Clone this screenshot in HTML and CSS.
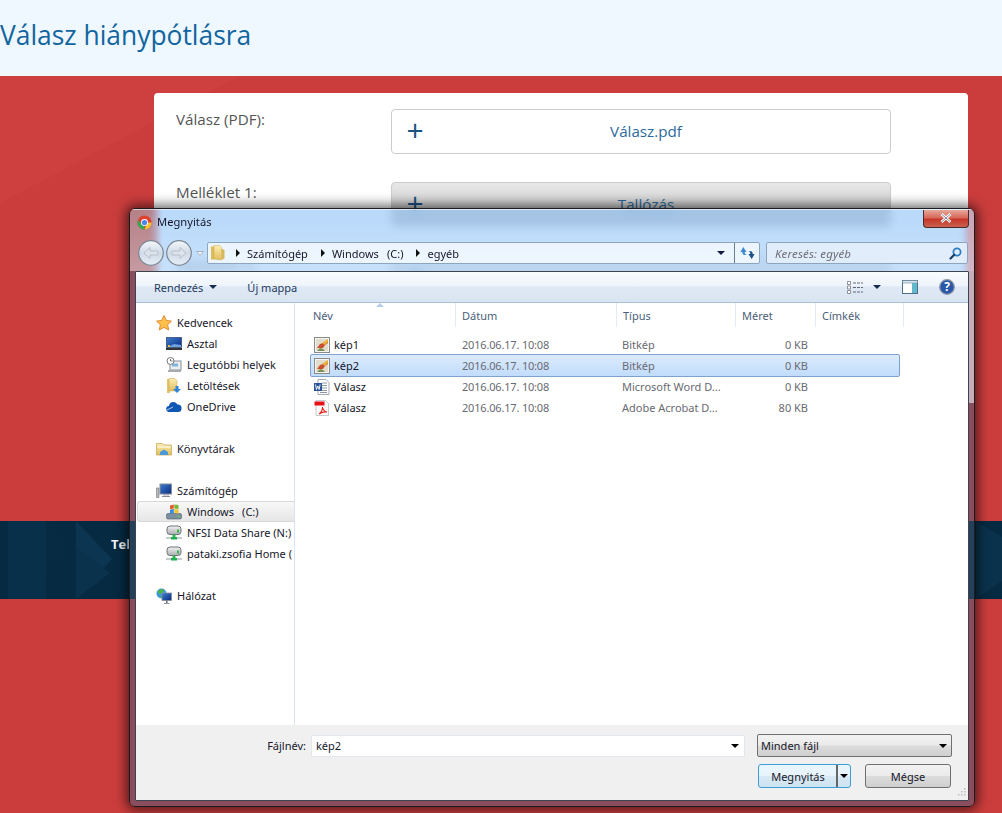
FILE: index.html
```html
<!DOCTYPE html>
<html lang="hu">
<head>
<meta charset="utf-8">
<title>Válasz hiánypótlásra</title>
<link rel="stylesheet" href="styles.css">
</head>
<body>
<svg class="defs" width="0" height="0" aria-hidden="true">
  <defs>
    <linearGradient id="gFolder" x1="0" y1="0" x2="0" y2="1"><stop offset="0" stop-color="#fbeeb0"/><stop offset="1" stop-color="#e2bd5e"/></linearGradient>
    <linearGradient id="gDrive" x1="0" y1="0" x2="0" y2="1"><stop offset="0" stop-color="#f2f2f2"/><stop offset="1" stop-color="#a9adb0"/></linearGradient>
    <linearGradient id="gScreen" x1="0" y1="0" x2="1" y2="1"><stop offset="0" stop-color="#3f7fd0"/><stop offset="1" stop-color="#082a80"/></linearGradient>
    <linearGradient id="gRound" x1="0" y1="0" x2="0" y2="1"><stop offset="0" stop-color="#f4f7fb"/><stop offset=".5" stop-color="#cfdbe8"/><stop offset="1" stop-color="#e6eef6"/></linearGradient>
    <symbol id="i-net" viewBox="0 0 16 16">
      <rect x="1" y="1" width="14" height="8.500" rx="3" fill="url(#gDrive)" stroke="#6f7579"/>
      <rect x="11" y="4.500" width="2" height="3" fill="#38b54a"/>
      <path d="M6.500 9.500h3v3h-3z" fill="#2fb455"/>
      <path d="M0 12h16v2H0z" fill="#c7cbce"/>
      <path d="M5 12h6v2.500H5z" fill="#1fae55"/>
    </symbol>
    <symbol id="i-bmp" viewBox="0 0 16 16">
      <rect x=".5" y=".5" width="15" height="15" fill="#f4f4f2" stroke="#8a8a88"/>
      <rect x="2" y="2" width="12" height="12" fill="#e2dccd"/>
      <path d="M3 11l3-4 3-1 5-3v3l-3 2-2 3H3z" fill="#c8502c"/>
      <path d="M8 6l6-4v3l-3 3z" fill="#eab03a"/>
      <path d="M3 14l3-3 3 1 2 2z" fill="#7a8f55"/>
    </symbol>
  </defs>
</svg>

<header class="page-head"><h1 class="page-title">Válasz hiánypótlásra</h1></header>

<main class="page-main">
  <form class="card">
    <div class="form-row">
      <label class="form-label">Válasz (PDF):</label>
      <div class="upload"><span class="upload-plus">+</span><span class="upload-text">Válasz.pdf</span></div>
    </div>
    <div class="form-row">
      <label class="form-label">Melléklet 1:</label>
      <div class="upload upload-empty"><span class="upload-plus">+</span><span class="upload-text">Tallózás</span></div>
    </div>
    <div class="form-row">
      <label class="form-label">Melléklet 2:</label>
      <div class="upload upload-empty"><span class="upload-plus">+</span></div>
    </div>
  </form>
</main>

<footer class="page-foot">
  <svg class="foot-pattern" viewBox="0 0 1002 78" preserveAspectRatio="none" aria-hidden="true">
    <path d="M8 0h38v78H8z" fill="#08304a"/>
    <path d="M46 0l28 26-28 26z" fill="#072b43"/>
    <path d="M76 0l36 38-36 40z" fill="#0b3550"/>
    <path d="M76 26l34 26-34 26z" fill="#0a324c"/>
    <path d="M976 0l26 16v44l-26 18z" fill="#0a324c"/>
  </svg>
  <span class="foot-text">Tel</span>
</footer>
<div class="page-end"></div>

<section class="dialog">
  <div class="glass">
    <div class="titlebar">
      <svg class="ico-title" viewBox="0 0 16 16">
        <circle cx="8" cy="8" r="7.500" fill="#e0412f"/>
        <path d="M15.500 8A7.500 7.500 0 0 1 8 15.500L11 8z" fill="#f6c62e"/>
        <path d="M8 15.500A7.500 7.500 0 0 1 1 5l4 5 3 1z" fill="#3aa757"/>
        <circle cx="8" cy="8" r="3.700" fill="#fff"/>
        <circle cx="8" cy="8" r="2.800" fill="#4786ee"/>
      </svg>
      <span class="title-text">Megnyitás</span>
      <span class="close-btn"><svg class="ico-x" viewBox="0 0 12 10"><path d="M1.500 1L10.500 9M10.500 1L1.500 9" stroke="#fff" stroke-width="2.800"/><path d="M1.500 1L10.500 9M10.500 1L1.500 9" stroke="#556" stroke-width=".7"/></svg></span>
    </div>
    <div class="navbar">
      <svg class="ico-nav" viewBox="0 0 26 26">
        <circle cx="13" cy="13" r="12.300" fill="url(#gRound)" stroke="#7d8793" stroke-width="1.200"/>
        <path d="M6 13l6-5.500v3.500h8v4h-8v3.500z" fill="#dde3ea" stroke="#b7c0cb"/>
      </svg>
      <svg class="ico-nav" viewBox="0 0 26 26">
        <circle cx="13" cy="13" r="12.300" fill="url(#gRound)" stroke="#7d8793" stroke-width="1.200"/>
        <path d="M20 13l-6-5.500v3.500H6v4h8v3.500z" fill="#dde3ea" stroke="#b7c0cb"/>
      </svg>
      <svg class="ico-navdrop" viewBox="0 0 8 5"><path d="M.5.5h7L4 4.500z" fill="#eef3f9" stroke="#9aa7b5" stroke-width=".8"/></svg>
      <div class="crumbs">
        <svg class="ico-16 crumb-folder" viewBox="0 0 16 16">
          <path d="M1 1.500h3.500v13H1z" fill="#dcbc5c"/><path d="M4 .5h5.500l2 2V15L4 14z" fill="url(#gFolder)" stroke="#c9a64e" stroke-width=".5"/><path d="M11.500 3.500l3 1.500v8.500l-3 1.500z" fill="#d8b75e"/>
        </svg>
        <span class="crumb-sep"></span><span class="crumb">Számítógép</span>
        <span class="crumb-sep"></span><span class="crumb crumb-drive">Windows&nbsp; (C:)</span>
        <span class="crumb-sep"></span><span class="crumb">egyéb</span>
        <span class="crumb-drop"></span>
        <span class="crumb-refresh">
          <svg class="ico-refresh" viewBox="0 0 16 14"><path d="M.5 6L3.500.5 7 6H5c0 1.500.5 2.500 2 3H4C3 8.500 2.500 7.500 2.500 6z" fill="#3d8ad0"/><path d="M15.500 8L12.500 13.500 9 8h2c0-1.500-.5-2.500-2-3h3c1 .5 1.500 1.500 1.500 3z" fill="#1c4f86"/></svg>
        </span>
      </div>
      <div class="search">
        <span class="search-text">Keresés: egyéb</span>
        <svg class="ico-search" viewBox="0 0 13 13"><circle cx="8" cy="5" r="3.600" fill="none" stroke="#2d7fc4" stroke-width="1.800"/><path d="M5.200 7.800L1.500 11.500" stroke="#17406e" stroke-width="2.200" stroke-linecap="round"/></svg>
      </div>
    </div>
  </div>

  <div class="lower">
    <div class="panel">
      <div class="toolbar">
        <span class="tool-item">Rendezés<i class="tool-caret"></i></span>
        <span class="tool-item">Új mappa</span>
        <span class="tool-spacer"></span>
        <svg class="ico-view" viewBox="0 0 16 13"><path d="M.5.5h3v3h-3zM.5 5h3v3h-3zM.5 9.500h3v3h-3z" fill="#fff" stroke="#778" stroke-width=".8"/><path d="M6 2h10M6 6.500h10M6 11h10" stroke="#667" stroke-width="1" stroke-dasharray="3 1"/></svg>
        <i class="tool-caret tool-caret-view"></i>
        <svg class="ico-pane" viewBox="0 0 16 14"><rect x=".5" y=".5" width="15" height="13" fill="#fff" stroke="#4c7186"/><rect x=".5" y=".5" width="15" height="2.500" fill="#d5e4ee" stroke="#4c7186" stroke-width=".5"/><rect x="10" y="3" width="5" height="10" fill="#62b8cc"/></svg>
        <svg class="ico-help" viewBox="0 0 16 16"><circle cx="8" cy="8" r="7.300" fill="#2a57a8" stroke="#8d97a6" stroke-width="1.300"/><text class="help-q" x="8" y="12" text-anchor="middle">?</text></svg>
      </div>

      <div class="explorer">
        <nav class="tree">
          <div class="tree-group">
            <div class="tree-head">
              <svg class="ico-16" viewBox="0 0 16 16"><path d="M8 .5l2.300 4.900 5.200.7-3.800 3.600 1 5.300L8 12.400 3.300 15l1-5.300L.5 6.100l5.200-.7z" fill="#fbc04a" stroke="#e0781e" stroke-width=".8"/></svg>
              <span>Kedvencek</span>
            </div>
            <div class="tree-item">
              <svg class="ico-16" viewBox="0 0 16 16"><rect x=".5" y="1.500" width="15" height="10" fill="url(#gScreen)" stroke="#2a3f66" stroke-width=".7"/><path d="M2 11l6-3 7 1v2z" fill="#6fa3e0"/><rect y="12" width="16" height="2" fill="#333"/><rect x="2" y="9" width="2" height="2" fill="#f1c040"/></svg>
              <span>Asztal</span>
            </div>
            <div class="tree-item">
              <svg class="ico-16" viewBox="0 0 16 16"><rect x="4" y="4" width="11" height="9" fill="#e9edf0" stroke="#8a9096"/><rect x="6" y="6.500" width="6" height="3" fill="#7fb6e0"/><rect x="2" y="13" width="13" height="2" fill="#aaa"/><circle cx="4.500" cy="4" r="3.500" fill="#fff" stroke="#777"/><path d="M4.500 2v2h2" stroke="#555" fill="none" stroke-width=".8"/></svg>
              <span>Legutóbbi helyek</span>
            </div>
            <div class="tree-item">
              <svg class="ico-16" viewBox="0 0 16 16"><path d="M1 1h3v14H1z" fill="#e4c56c"/><path d="M3 .5h6l2 2V13H3z" fill="url(#gFolder)" stroke="#c9a64e" stroke-width=".5"/><path d="M9.500 8h3v3H15l-4 4-4-4h2.500z" fill="#2f86d8"/></svg>
              <span>Letöltések</span>
            </div>
            <div class="tree-item">
              <svg class="ico-16" viewBox="0 0 16 16"><path d="M3.500 13a3 3 0 0 1-.5-6 4.500 4.500 0 0 1 8.500-1.500A3.500 3.500 0 0 1 15.500 9.500 3.500 3.500 0 0 1 12 13z" fill="#0f56b3"/><path d="M1 11l6-3" stroke="#fff" stroke-width=".7"/></svg>
              <span>OneDrive</span>
            </div>
          </div>
          <div class="tree-group">
            <div class="tree-head">
              <svg class="ico-16" viewBox="0 0 16 16"><path d="M.5 2.500h6l1.500 1.500h7.500v10H.5z" fill="url(#gFolder)" stroke="#c4a24c" stroke-width=".7"/><path d="M1.500 6h13" stroke="#fff"/><path d="M4 14v-3l4-2.500 4 2.500v3z" fill="#4a9ad8"/></svg>
              <span>Könyvtárak</span>
            </div>
          </div>
          <div class="tree-group">
            <div class="tree-head">
              <svg class="ico-16" viewBox="0 0 16 16"><rect x="4" y="1" width="11.500" height="10" fill="url(#gScreen)" stroke="#8a9096"/><path d="M7 11h6v1.500H7z" fill="#aab"/><path d="M6 13h8v1H6z" fill="#889"/><rect x=".5" y="5" width="2.500" height="9.500" fill="#b5b9bc" stroke="#666" stroke-width=".5"/></svg>
              <span>Számítógép</span>
            </div>
            <div class="tree-item tree-current">
              <svg class="ico-16" viewBox="0 0 16 16"><rect x=".5" y="9.500" width="15" height="5.500" rx="1.500" fill="#7b8f9f" stroke="#4d5e6c" stroke-width=".6"/><rect x="11.500" y="11.500" width="2" height="1.500" fill="#52d152"/><path d="M4 1.500l3.800-1v4l-3.800.8z" fill="#e85a30"/><path d="M8.300.5l4.200.6v4l-4.200-.6z" fill="#77b83c"/><path d="M4 5.800l3.800-.8v4l-3.800.8z" fill="#2f8de0"/><path d="M8.300 5l4.200.6v4L8.300 9z" fill="#f4c233"/></svg>
              <span class="drive-label">Windows&nbsp; (C:)</span>
            </div>
            <div class="tree-item">
              <svg class="ico-16"><use href="#i-net"/></svg>
              <span>NFSI Data Share (N:)</span>
            </div>
            <div class="tree-item">
              <svg class="ico-16"><use href="#i-net"/></svg>
              <span>pataki.zsofia Home (</span>
            </div>
          </div>
          <div class="tree-group">
            <div class="tree-head">
              <svg class="ico-16" viewBox="0 0 16 16"><circle cx="5.500" cy="5.500" r="5" fill="#3a9ad8"/><path d="M2 3l3-2 3 1-2 3-3 1zM5 8l3 1-1 2-2-1z" fill="#4fb53c"/><rect x="6" y="5" width="9.500" height="7.500" fill="url(#gScreen)" stroke="#8a9096" stroke-width=".8"/><path d="M10 12.500h1.500V15H10zM8 15h5.500v.8H8z" fill="#66707c"/></svg>
              <span>Hálózat</span>
            </div>
          </div>
        </nav>

        <div class="files">
          <div class="cols">
            <span class="col col-name">Név<i class="sort-mark"></i></span>
            <span class="col col-date">Dátum</span>
            <span class="col col-type">Típus</span>
            <span class="col col-size">Méret</span>
            <span class="col col-tags">Címkék</span>
          </div>
          <div class="file-list">
            <div class="file">
              <span class="f-name"><svg class="ico-16"><use href="#i-bmp"/></svg><b class="f-label">kép1</b></span>
              <span class="f-date">2016.06.17. 10:08</span><span class="f-type">Bitkép</span><span class="f-size">0 KB</span>
            </div>
            <div class="file file-selected">
              <span class="f-name"><svg class="ico-16"><use href="#i-bmp"/></svg><b class="f-label">kép2</b></span>
              <span class="f-date">2016.06.17. 10:08</span><span class="f-type">Bitkép</span><span class="f-size">0 KB</span>
            </div>
            <div class="file">
              <span class="f-name"><svg class="ico-16" viewBox="0 0 16 16"><path d="M4 .5h8l3 3v12H4z" fill="#fff" stroke="#8e98a4" stroke-width=".8"/><path d="M8 4h5M8 6.500h5M8 9h5M8 11.500h5M6 13.500h7" stroke="#8e98a4"/><rect y="4" width="8" height="8" fill="#2b579a"/><path d="M1.500 5.500l1 5 1.300-3.500 1.300 3.500 1-5" stroke="#fff" fill="none" stroke-width=".9"/></svg><b class="f-label">Válasz</b></span>
              <span class="f-date">2016.06.17. 10:08</span><span class="f-type">Microsoft Word D...</span><span class="f-size">0 KB</span>
            </div>
            <div class="file">
              <span class="f-name"><svg class="ico-16" viewBox="0 0 16 16"><path d="M2 .5h9.500l3 3v12H2z" fill="#fafafa" stroke="#b9bdc2" stroke-width=".8"/><path d="M.5 1.500h10v4H.5z" fill="#e8111a"/><path d="M5 14c2-1.500 3.500-4.500 3.500-7 .5 3 2 4.500 4.500 5-2.500-.3-5.500.3-8 2z" fill="none" stroke="#e8261e" stroke-width="1.100"/></svg><b class="f-label">Válasz</b></span>
              <span class="f-date">2016.06.17. 10:08</span><span class="f-type">Adobe Acrobat D...</span><span class="f-size">80 KB</span>
            </div>
          </div>
        </div>
      </div>

      <div class="actions">
        <div class="action-row">
          <span class="name-label">Fájlnév:</span>
          <div class="name-input"><span class="name-value">kép2</span><i class="caret-black"></i></div>
          <div class="type-select"><span>Minden fájl</span><i class="caret-black"></i></div>
        </div>
        <div class="action-row action-buttons">
          <div class="btn btn-primary"><span class="btn-main">Megnyitás</span><span class="btn-split"><i class="caret-black"></i></span></div>
          <div class="btn btn-cancel">Mégse</div>
        </div>
        <svg class="grip" viewBox="0 0 10 10"><path d="M8 1h1.500v1.500H8zM5 4h1.500v1.500H5zM8 4h1.500v1.500H8zM2 7h1.500v1.500H2zM5 7h1.500v1.500H5zM8 7h1.500v1.500H8z" fill="#b9bcc0"/></svg>
      </div>
    </div>
  </div>
</section>
</body>
</html>
```
FILE: styles.css
```css
* { box-sizing: border-box; }
html, body { margin: 0; padding: 0; }
body {
  width: 1002px;
  height: 813px;
  overflow: hidden;
  display: flex;
  flex-direction: column;
  font-family: "Open Sans", "Noto Sans", sans-serif;
  background: #cb3d3d;
}
.defs { position: absolute; }

.page-head { height: 76px; background: #f0f8ff; display: flex; align-items: center; flex: none; }
.page-title { margin: 0; font-size: 26.400px; font-weight: 400; color: #11659f; line-height: 1; position: relative; top: -3px; }

.page-main {
  height: 445px;
  flex: none;
  padding: 17px 0 0 154px;
  background: linear-gradient(152deg, #ce4040 0, #ce4040 13%, #cb3d3d 13%, #cb3d3d 100%);
  overflow: hidden;
}
.card {
  width: 814px;
  height: 310px;
  background: #fff;
  border-radius: 4px;
  padding: 16px 0 0 22px;
  display: flex;
  flex-direction: column;
  gap: 28px;
}
.form-row { display: flex; height: 45px; }
.form-label { width: 215px; font-size: 15.200px; color: #555; line-height: 20px; }
.upload {
  width: 500px;
  height: 45px;
  border: 1px solid #ccc;
  border-radius: 4px;
  background: #fff;
  display: flex;
  align-items: center;
  padding-left: 14px;
  position: relative;
}
.upload-empty { background: linear-gradient(#e8e8e8, #bcbcbc); }
.upload-plus { font-size: 30px; line-height: 1; color: #1a5282; width: 18px; text-align: center; font-weight: 400; position: relative; top: -2px; }
.upload-text { flex: 1; text-align: center; font-size: 15.200px; color: #2c6a9e; padding-right: 22px; position: relative; top: -1px; }

.page-foot {
  height: 78px;
  flex: none;
  background: #062a41;
  position: relative;
  display: flex;
  align-items: flex-start;
  padding: 13px 0 0 111px;
  overflow: hidden;
}
.foot-pattern { position: absolute; left: 0; top: 0; width: 1002px; height: 78px; }
.foot-text { position: relative; font-size: 13px; font-weight: 700; color: #f2f6fa; line-height: 20px; }
.page-end { flex: 1; background: #cb3d3d; }

/* File dialog window */
.dialog {
  position: absolute;
  left: 129px;
  top: 208px;
  width: 846px;
  height: 599px;
  border: 1px solid #1b1b20;
  border-radius: 6px;
  box-shadow: 0 0 12px 3px rgba(0, 0, 0, .6);
  backdrop-filter: blur(5px);
  overflow: hidden;
  display: flex;
  flex-direction: column;
  font-family: "Noto Sans", "Open Sans", sans-serif;
  font-size: 11px;
  color: #17172a;
}
.glass {
  height: 62px;
  flex: none;
  padding: 0 6px;
  background:
    linear-gradient(rgba(255, 255, 255, 0), rgba(255, 255, 255, .2)),
    linear-gradient(90deg, rgba(181, 132, 140, .96) 0, rgba(181, 132, 140, .96) 18px, rgba(138, 192, 248, .6) 32px, rgba(138, 192, 248, .6) 834px, rgba(200, 170, 190, .9) 841px);
  border-top: 1px solid rgba(255, 255, 255, .5);
}
.titlebar { height: 25px; display: flex; align-items: center; padding-left: 1px; }
.ico-title { width: 15px; height: 15px; margin: 0 5px 1px 0; flex: none; }
.title-text { font-size: 11.200px; position: relative; top: -1px; }
.close-btn {
  margin: -8px -1px 0 auto;
  width: 46px;
  height: 18px;
  border: 1px solid #4b2a2a;
  border-top: 0;
  border-radius: 0 0 4px 4px;
  background: linear-gradient(#e6a99c 0, #d8695a 45%, #c7362a 55%, #c9624f 100%);
  display: flex;
  align-items: center;
  justify-content: center;
}
.ico-x { width: 12px; height: 10px; }

.navbar { height: 30px; display: flex; align-items: flex-start; padding: 7px 0 0 2px; }
.ico-nav { width: 26px; height: 26px; margin: -2px 2px 0 0; flex: none; }
.ico-navdrop { width: 8px; height: 5px; margin: 9px 3px 0 2px; flex: none; }
.crumbs {
  width: 553px;
  height: 22px;
  background: rgba(240, 247, 254, .92);
  border: 1px solid #8ea6bd;
  border-radius: 2px;
  display: flex;
  align-items: center;
  padding-left: 2px;
}
.crumb-folder { margin-right: 4px; }
.crumb-sep { width: 0; height: 0; border-style: solid; border-width: 4px 0 4px 4px; border-color: transparent transparent transparent #111; margin: 0 7px 0 6px; }
.crumb { white-space: nowrap; margin-right: 7px; }
.crumb-drive, .drive-label { word-spacing: 1.200px; }
.crumb-drop { margin-left: auto; margin-right: 9px; width: 0; height: 0; border-style: solid; border-width: 4px 4px 0; border-color: #111a44 transparent transparent; }
.crumb-refresh { width: 25px; height: 20px; border-left: 1px solid #6c7f92; display: flex; align-items: center; justify-content: center; }
.ico-refresh { width: 15px; height: 14px; }
.search {
  width: 202px;
  height: 22px;
  margin-left: 6px;
  background: rgba(230, 240, 250, .85);
  border: 1px solid #8ea6bd;
  border-radius: 2px;
  display: flex;
  align-items: center;
  justify-content: space-between;
  padding: 0 5px 0 8px;
}
.search-text { font-style: italic; color: #6e6e76; font-size: 11.500px; letter-spacing: .15px; }
.ico-search { width: 13px; height: 13px; }

.lower {
  flex: 1;
  min-height: 0;
  padding: 0 5px 5px;
  background-image:
    linear-gradient(#8a4d5e 0, #8a4d5e 250px, #25405a 250px, #25405a 328px, #8a4d5e 328px),
    linear-gradient(#c6adba 0, #c6adba 132px, #8a4d5e 132px, #8a4d5e 250px, #25405a 250px, #25405a 328px, #8a4d5e 328px);
  background-size: 50% 100%, 50% 100%;
  background-position: left top, right top;
  background-repeat: no-repeat;
}
.panel {
  height: 100%;
  background: #fff;
  border: 1px solid #3c4450;
  border-radius: 1px;
  display: flex;
  flex-direction: column;
}

.toolbar {
  height: 31px;
  flex: none;
  display: flex;
  align-items: center;
  background: linear-gradient(#fafcfe 0, #eef4fb 45%, #dfe9f5 50%, #d9e5f2 100%);
  border-bottom: 1px solid #a9bfd6;
  padding: 0 13px 0 18px;
  color: #1e3a5f;
}
.tool-item { display: inline-flex; align-items: center; margin-right: 30px; }
.tool-caret { display: inline-block; width: 0; height: 0; border-style: solid; border-width: 4px 4px 0; border-color: #152c4e transparent transparent; margin-left: 6px; }
.tool-spacer { flex: 1; }
.ico-view { width: 16px; height: 13px; flex: none; }
.tool-caret-view { margin: 0 21px 0 10px; }
.ico-pane { width: 16px; height: 14px; flex: none; margin-right: 21px; }
.ico-help { width: 16px; height: 16px; flex: none; }
.help-q { font-size: 12px; font-weight: 700; fill: #fff; font-family: "Noto Sans", sans-serif; }

.explorer { flex: 1; min-height: 0; display: flex; }
.tree {
  width: 159px;
  flex: none;
  border-right: 1px solid #d6e5f5;
  padding: 9px 0 0 1px;
  overflow: hidden;
  display: flex;
  flex-direction: column;
  gap: 21px;
}
.tree-head, .tree-item { height: 21px; display: flex; align-items: center; white-space: nowrap; overflow: hidden; }
.tree-head { padding-left: 19px; gap: 5px; }
.tree-item { padding-left: 29px; gap: 5px; }
.tree-current {
  background: linear-gradient(#f8f8f8, #e6e6e6);
  border: 1px solid #d9d9d9;
  border-right: 0;
  border-radius: 3px 0 0 3px;
  padding-left: 28px;
}
.ico-16 { width: 16px; height: 16px; flex: none; display: block; }

.files { flex: 1; min-width: 0; }
.cols { height: 24px; display: grid; grid-template-columns: 161px 161px 119px 80px 88px 1fr; color: #4c607a; }
.col { display: flex; align-items: center; border-right: 1px solid #e3ebf4; padding-left: 6px; position: relative; height: 24px; }
.col-name { padding-left: 18px; }
.sort-mark { position: absolute; left: 81px; top: 0; width: 0; height: 0; border-style: solid; border-width: 0 4px 4px; border-color: transparent transparent #b5cde8; }
.file-list { padding: 7px 0 0 15px; display: flex; flex-direction: column; }
.file { height: 21px; width: 590px; display: grid; grid-template-columns: 151px 160px 94px 92px; align-items: center; border: 1px solid transparent; border-radius: 2px; color: #6a6a72; }
.file-selected { background: linear-gradient(#dcebfc, #c1dcfc); border-color: #7da2ce; height: 23px; margin: -1px 0; }
.f-name { display: flex; align-items: center; padding-left: 3px; gap: 4px; }
.f-label { font-weight: 400; color: #17172a; }
.f-date { letter-spacing: -.18px; white-space: nowrap; }
.f-type { white-space: nowrap; }
.f-size { text-align: right; }

.actions { height: 75px; flex: none; background: #f0f0f0; padding: 9px 16px 0 0; position: relative; }
.action-row { display: flex; align-items: center; justify-content: flex-end; }
.action-buttons { margin-top: 7px; gap: 14px; padding-right: 1px; }
.name-label { margin-right: 5px; }
.name-input { width: 434px; height: 22px; background: #fff; border: 1px solid #e3e8ee; display: flex; align-items: center; padding: 0 5px 0 4px; margin-right: 12px; }
.name-value { flex: 1; }
.type-select { width: 195px; height: 23px; border: 1px solid #707070; border-radius: 2px; background: linear-gradient(#f2f2f2 0, #ebebeb 48%, #dcdcdc 52%, #cfcfcf 100%); display: flex; align-items: center; justify-content: space-between; padding: 0 4px 0 3px; }
.caret-black { display: inline-block; width: 0; height: 0; border-style: solid; border-width: 4px 4px 0; border-color: #000 transparent transparent; }
.btn { height: 24px; border-radius: 3px; display: flex; align-items: center; justify-content: center; background: linear-gradient(#f2f2f2 0, #ebebeb 48%, #dcdcdc 52%, #cfcfcf 100%); border: 1px solid #707070; }
.btn-primary { width: 93px; border-color: #3c9ed6; background: linear-gradient(#eaf6fd 0, #e8f4fb 48%, #d7e9f4 52%, #cde3f0 100%); padding-left: 1px; }
.btn-main { flex: 1; text-align: center; }
.btn-split { width: 14px; height: 100%; border-left: 2px solid #666; display: flex; align-items: center; justify-content: center; }
.btn-cancel { width: 86px; }
.grip { position: absolute; right: 2px; bottom: 3px; width: 10px; height: 10px; }
```
